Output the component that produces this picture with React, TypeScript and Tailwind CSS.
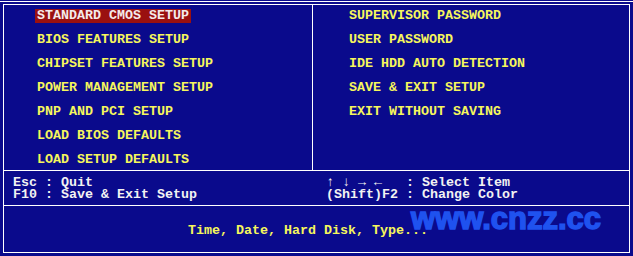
import React from 'react';

const leftItems = [
  'STANDARD CMOS SETUP',
  'BIOS FEATURES SETUP',
  'CHIPSET FEATURES SETUP',
  'POWER MANAGEMENT SETUP',
  'PNP AND PCI SETUP',
  'LOAD BIOS DEFAULTS',
  'LOAD SETUP DEFAULTS',
];

const rightItems = [
  'SUPERVISOR PASSWORD',
  'USER PASSWORD',
  'IDE HDD AUTO DETECTION',
  'SAVE & EXIT SETUP',
  'EXIT WITHOUT SAVING',
];

const MenuItem = ({ label, active }: { label: string; active?: boolean }) => (
  <div className="h-[24px] flex items-start">
    <span
      className={`px-[2px] leading-[14px] whitespace-pre ${
        active ? 'bg-[#9a1010] text-[#f4eaea]' : 'text-[#f6f65c]'
      }`}
    >
      {label}
    </span>
  </div>
);

export default function App() {
  return (
    <div
      className="relative w-[633px] h-[256px] overflow-hidden bg-[#0a0a8c] font-bold text-[13.33px]"
      style={{ fontFamily: '"Liberation Mono", "DejaVu Sans Mono", monospace' }}
    >
      <div className="h-px mt-px bg-white" />

      <div className="ml-[3px] mt-[2px] w-[627px] h-[249px] border border-white flex flex-col">
        {/* menu */}
        <div className="h-[166px] border-b border-white flex">
          <div className="w-[309px] border-r border-white pt-[4px] pl-[31px]">
            {leftItems.map((item, i) => (
              <MenuItem key={item} label={item} active={i === 0} />
            ))}
          </div>
          <div className="flex-1 pt-[4px] pl-[34px]">
            {rightItems.map((item) => (
              <MenuItem key={item} label={item} />
            ))}
          </div>
        </div>

        {/* key help */}
        <div className="h-[35px] border-b border-white flex pt-[6px] text-[#f2f2f2] leading-[12px] whitespace-pre">
          <div className="w-[309px] pl-[9px]">
            <div>Esc : Quit</div>
            <div>F10 : Save &amp; Exit Setup</div>
          </div>
          <div className="flex-1 pl-[13px]">
            <div>↑ ↓ → ←   : Select Item</div>
            <div>(Shift)F2 : Change Color</div>
          </div>
        </div>

        {/* status */}
        <div className="flex-1 pt-[18px] pl-[184px] leading-[14px] text-[#f6f65c]">
          Time, Date, Hard Disk, Type...
        </div>
      </div>

      {/* watermark */}
      <div
        className="absolute left-[411px] top-[203px] text-[31px] leading-none font-black text-[#1f52ef] tracking-[0px] [-webkit-text-stroke:1.5px_#1f52ef]"
        style={{ fontFamily: '"Liberation Sans", Arial, sans-serif' }}
      >
        www.cnzz.cc
      </div>
    </div>
  );
}
